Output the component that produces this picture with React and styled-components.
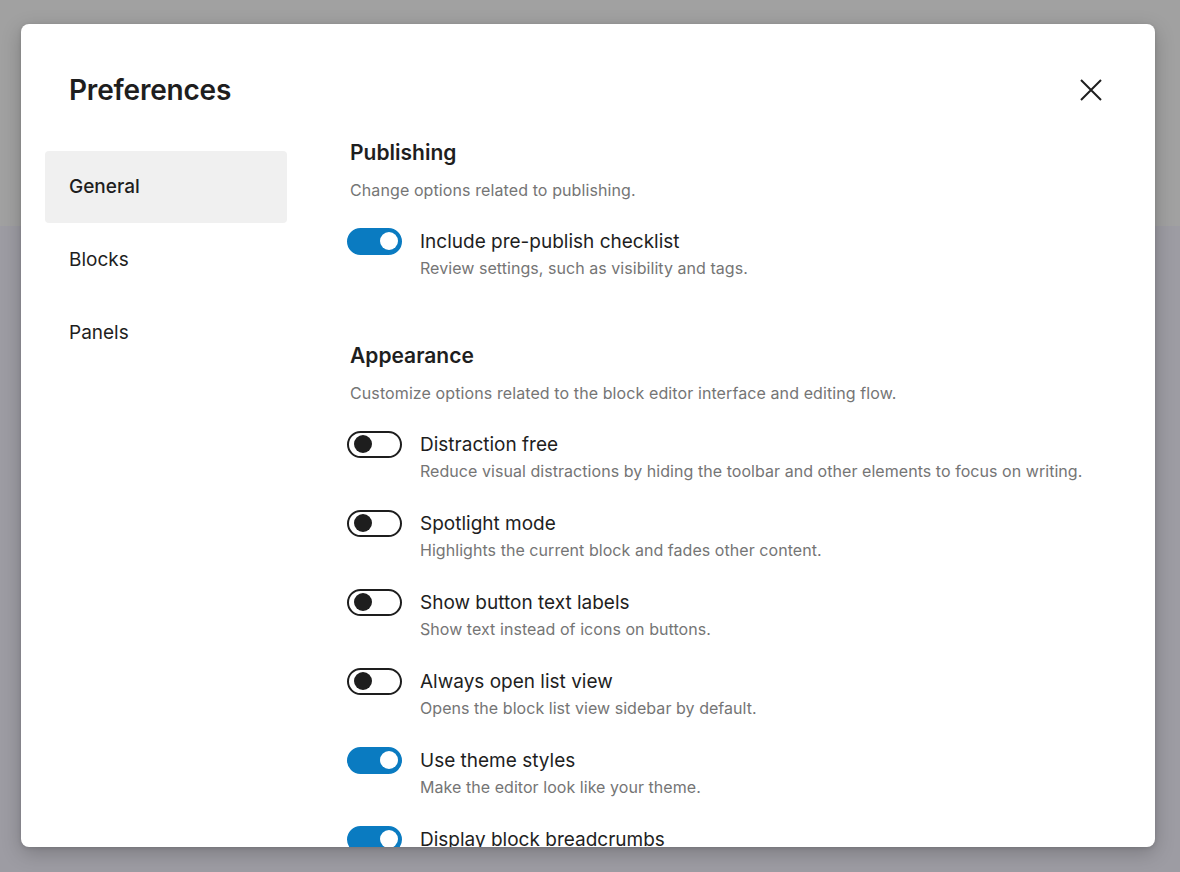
import React, { useState } from 'react'
import styled, { createGlobalStyle } from 'styled-components'

const GlobalStyle = createGlobalStyle`
  html, body {
    margin: 0;
    padding: 0;
  }
  body {
    font-family: Inter, "Noto Sans", "Liberation Sans", sans-serif;
    -webkit-font-smoothing: antialiased;
  }
`

const sections = [
  {
    title: 'Publishing',
    description: 'Change options related to publishing.',
    options: [
      { label: 'Include pre-publish checklist', help: 'Review settings, such as visibility and tags.', on: true },
    ],
  },
  {
    title: 'Appearance',
    description: 'Customize options related to the block editor interface and editing flow.',
    options: [
      { label: 'Distraction free', help: 'Reduce visual distractions by hiding the toolbar and other elements to focus on writing.', on: false },
      { label: 'Spotlight mode', help: 'Highlights the current block and fades other content.', on: false },
      { label: 'Show button text labels', help: 'Show text instead of icons on buttons.', on: false },
      { label: 'Always open list view', help: 'Opens the block list view sidebar by default.', on: false },
      { label: 'Use theme styles', help: 'Make the editor look like your theme.', on: true },
      { label: 'Display block breadcrumbs', help: 'Shows block breadcrumbs at the bottom of the editor.', on: true },
    ],
  },
]

const tabs = ['General', 'Blocks', 'Panels']

export default function App() {
  const [active, setActive] = useState('General')
  const [values, setValues] = useState(() =>
    sections.flatMap((s) => s.options).reduce((acc, o) => ({ ...acc, [o.label]: o.on }), {})
  )

  const flip = (label) => setValues((v) => ({ ...v, [label]: !v[label] }))

  return (
    <>
      <GlobalStyle />
      <Backdrop>
        <Modal role="dialog" aria-label="Preferences">
          <Header>
            <Title>Preferences</Title>
            <CloseButton aria-label="Close">
              <svg width="24" height="24" viewBox="0 0 24 24" fill="none">
                <path d="M2 2 L22 22 M22 2 L2 22" stroke="#1e1e1e" strokeWidth="2" />
              </svg>
            </CloseButton>
          </Header>

          <Body>
            <Sidebar>
              {tabs.map((t) => (
                <Tab key={t} $active={active === t} onClick={() => setActive(t)}>
                  {t}
                </Tab>
              ))}
            </Sidebar>

            <Content>
              {sections.map((s) => (
                <Section key={s.title}>
                  <SectionTitle>{s.title}</SectionTitle>
                  <SectionDescription>{s.description}</SectionDescription>
                  <Options>
                    {s.options.map((o) => (
                      <OptionRow key={o.label}>
                        <Toggle $on={values[o.label]} onClick={() => flip(o.label)} aria-pressed={values[o.label]}>
                          <Thumb $on={values[o.label]} />
                        </Toggle>
                        <OptionText>
                          <OptionLabel>{o.label}</OptionLabel>
                          <OptionHelp>{o.help}</OptionHelp>
                        </OptionText>
                      </OptionRow>
                    ))}
                  </Options>
                </Section>
              ))}
            </Content>
          </Body>
        </Modal>
      </Backdrop>
    </>
  )
}

/* -- Components -- */

// Backdrop (dimmed editor behind the modal)
const Backdrop = styled.div`
  width: 100vw;
  height: 100vh;
  display: flex;
  align-items: center;
  justify-content: flex-start;
  background: linear-gradient(to bottom, #a1a1a1 0, #a1a1a1 226px, #9d9ca3 226px, #9d9ca3 100%);
  overflow: hidden;
`

// Modal frame
const Modal = styled.div`
  margin-left: 21px;
  margin-top: -2px;
  width: 1134px;
  height: 823px;
  background: #fff;
  border-radius: 8px;
  box-shadow: 0 6px 20px rgba(0, 0, 0, 0.22), 0 1px 4px rgba(0, 0, 0, 0.12);
  display: flex;
  flex-direction: column;
  overflow: hidden;
`

// Header
const Header = styled.div`
  flex: none;
  height: 115px;
  box-sizing: border-box;
  padding: 42px 40px 0 48px;
  display: flex;
  align-items: flex-start;
  justify-content: space-between;
`

const Title = styled.h1`
  margin: 0;
  font-size: 28px;
  line-height: 48px;
  font-weight: 600;
  color: #1e1e1e;
  letter-spacing: -0.2px;
`

const CloseButton = styled.button`
  width: 48px;
  height: 48px;
  border: 0;
  padding: 0;
  background: transparent;
  display: flex;
  align-items: center;
  justify-content: center;
  cursor: pointer;
`

// Body
const Body = styled.div`
  flex: 1;
  display: flex;
  min-height: 0;
`

const Sidebar = styled.nav`
  flex: none;
  width: 242px;
  margin-left: 24px;
  padding-top: 12px;
  display: flex;
  flex-direction: column;
  gap: 1px;
`

const Tab = styled.button`
  height: 72px;
  border: 0;
  border-radius: 4px;
  padding: 0 0 0 24px;
  text-align: left;
  font-family: inherit;
  font-size: 19px;
  font-weight: ${(p) => (p.$active ? 500 : 400)};
  color: #1e1e1e;
  background: ${(p) => (p.$active ? '#f0f0f0' : 'transparent')};
  cursor: pointer;
`

const Content = styled.div`
  flex: 1;
  margin-left: 63px;
  padding-right: 40px;
  display: flex;
  flex-direction: column;
  gap: 63px;
`

const Section = styled.section`
  display: flex;
  flex-direction: column;
`

const SectionTitle = styled.h2`
  margin: 0;
  font-size: 21px;
  line-height: 28px;
  font-weight: 600;
  color: #1e1e1e;
`

const SectionDescription = styled.p`
  margin: 11px 0 0;
  font-size: 16px;
  line-height: 24px;
  letter-spacing: 0.1px;
  color: #757575;
`

const Options = styled.div`
  margin-top: 26px;
  display: flex;
  flex-direction: column;
  gap: 28px;
`

const OptionRow = styled.div`
  display: flex;
  align-items: flex-start;
  gap: 18px;
`

// Toggle switch
const Toggle = styled.button`
  flex: none;
  margin-left: -3px;
  width: 55px;
  height: 27px;
  box-sizing: border-box;
  border-radius: 14px;
  padding: 0;
  position: relative;
  cursor: pointer;
  border: 2px solid ${(p) => (p.$on ? '#0a7bc1' : '#1e1e1e')};
  background: ${(p) => (p.$on ? '#0a7bc1' : '#fff')};
`

const Thumb = styled.span`
  position: absolute;
  top: 2.5px;
  left: ${(p) => (p.$on ? '30.5px' : '4.5px')};
  width: 18px;
  height: 18px;
  border-radius: 50%;
  background: ${(p) => (p.$on ? '#fff' : '#1e1e1e')};
`

const OptionText = styled.div`
  display: flex;
  flex-direction: column;
`

const OptionLabel = styled.span`
  font-size: 19px;
  line-height: 27px;
  color: #1e1e1e;
`

const OptionHelp = styled.span`
  margin-top: 2px;
  font-size: 16px;
  line-height: 22px;
  letter-spacing: 0.05px;
  color: #757575;
`
